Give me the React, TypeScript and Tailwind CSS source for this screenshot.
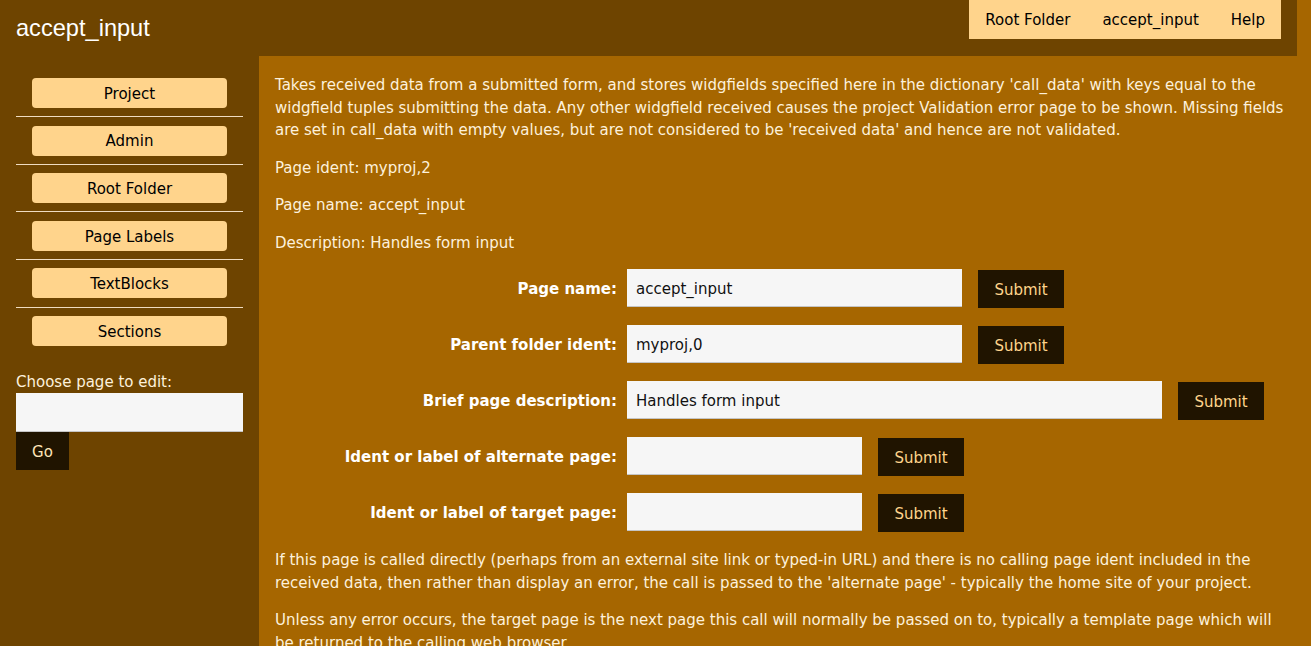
import React from "react";

const font = { fontFamily: '"DejaVu Sans", Verdana, sans-serif' };

function SideButton({ label }: { label: string }) {
  return (
    <div className="mx-8 h-[30px] rounded-[4px] bg-[#ffd48c] flex items-center justify-center pt-[2px] text-[15px] text-black">
      {label}
    </div>
  );
}

function Row({
  label,
  value,
  width,
}: {
  label: string;
  value: string;
  width: string;
}) {
  return (
    <div className="flex items-center h-[38px] mb-[18px]">
      <div className="w-[352px] pr-[10px] pt-[3px] text-right font-bold text-[15px] text-white">
        {label}
      </div>
      <div
        className={`${width} h-[38px] bg-[#f6f6f6] border-b border-[#c5c5c5] flex items-center px-[9px] pt-[3px] text-[15px] text-[#111]`}
      >
        {value}
      </div>
      <button className="ml-4 mt-[2px] pt-[2px] w-[86px] h-[38px] bg-[#201400] text-[#ffd48c] text-[15px]">
        Submit
      </button>
    </div>
  );
}

export default function App() {
  const items = ["Project", "Admin", "Root Folder", "Page Labels", "TextBlocks", "Sections"];
  return (
    <div className="w-[1311px] h-[646px] overflow-hidden bg-[#a66600] leading-[1.5]" style={font}>
      <div className="w-[1297px] h-[56px] bg-[#6e4400] flex justify-between items-start">
        <div
          className="pl-4 pt-[14px] text-[23.6px] leading-[28px] text-white"
          style={{ fontFamily: '"Liberation Sans", Arial, sans-serif' }}
        >
          accept_input
        </div>
        <div className="mr-4 h-[39px] bg-[#ffd48c] flex items-center pt-px text-[15px] text-black">
          <span className="px-4">Root Folder</span>
          <span className="px-4">accept_input</span>
          <span className="px-4">Help</span>
        </div>
      </div>
      <div className="flex">
        <div className="w-[259px] h-[590px] bg-[#6e4400] pt-[22px]">
          {items.map((it, i) => (
            <div key={it}>
              <SideButton label={it} />
              {i < items.length - 1 && (
                <div className="mx-4 py-[8.3px]">
                  <div className="h-px bg-[#f0dcc0]" />
                </div>
              )}
            </div>
          ))}
          <div className="px-4 mt-[25px] text-[15px] text-[#fdf1dc]">Choose page to edit:</div>
          <div className="mx-4 h-[39px] bg-[#f6f6f6] border-b border-[#c5c5c5]" />
          <button className="ml-4 pt-[2px] w-[53px] h-[38px] bg-[#201400] text-[#ffe6b8] text-[15px]">
            Go
          </button>
        </div>
        <div className="flex-1 px-4 pt-[18px] text-[15px] text-[#fdf1dc]">
          <p className="mb-[15px]">
            Takes received data from a submitted form, and stores widgfields specified here in the
            dictionary 'call_data' with keys equal to the widgfield tuples submitting the data. Any
            other widgfield received causes the project Validation error page to be shown. Missing
            fields are set in call_data with empty values, but are not considered to be 'received
            data' and hence are not validated.
          </p>
          <p className="mb-[15px]">Page ident: myproj,2</p>
          <p className="mb-[15px]">Page name: accept_input</p>
          <p className="mb-[15px]">Description: Handles form input</p>
          <div>
            <Row label="Page name:" value="accept_input" width="w-[335px]" />
            <Row label="Parent folder ident:" value="myproj,0" width="w-[335px]" />
            <Row label="Brief page description:" value="Handles form input" width="w-[535px]" />
            <Row label="Ident or label of alternate page:" value="" width="w-[235px]" />
            <Row label="Ident or label of target page:" value="" width="w-[235px]" />
          </div>
          <p className="mb-[15px]">
            If this page is called directly (perhaps from an external site link or typed-in URL) and
            there is no calling page ident included in the received data, then rather than display an
            error, the call is passed to the 'alternate page' - typically the home site of your
            project.
          </p>
          <p className="mb-[15px]">
            Unless any error occurs, the target page is the next page this call will normally be
            passed on to, typically a template page which will be returned to the calling web
            browser.
          </p>
        </div>
      </div>
    </div>
  );
}
